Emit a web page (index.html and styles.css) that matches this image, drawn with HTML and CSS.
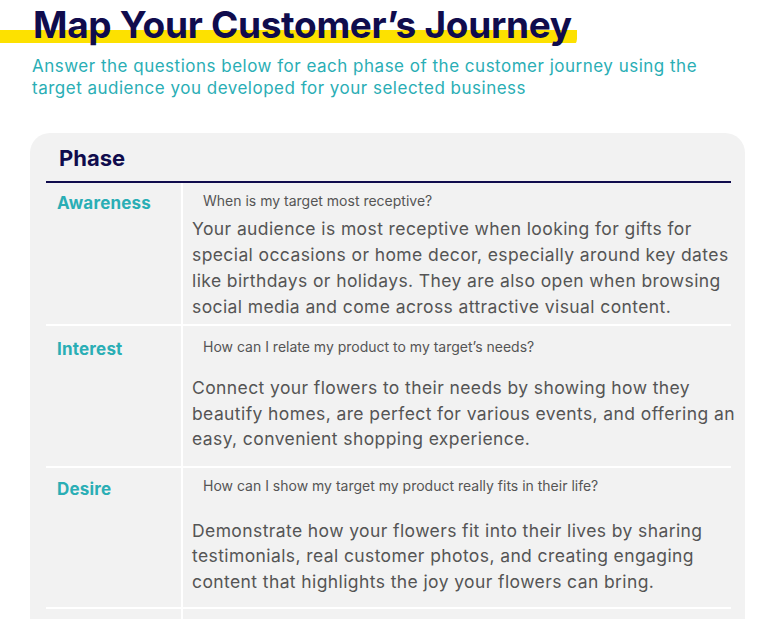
FILE: index.html
```html
<!DOCTYPE html>
<html>
<head>
<meta charset="utf-8">
<link rel="stylesheet" href="styles.css">
</head>
<body>
<header class="hero">
  <h1 class="title"><span class="title-text">Map Your Customer’s Journey</span></h1>
  <p class="subtitle">Answer the questions below for each phase of the customer journey using the target audience you developed for your selected business</p>
</header>
<section class="card">
  <div class="card-head">Phase</div>
  <div class="table">
    <div class="row row-1">
      <div class="phase">Awareness</div>
      <div class="cell">
        <div class="question">When is my target most receptive?</div>
        <div class="answer">Your audience is most receptive when looking for gifts for special occasions or home decor, especially around key dates like birthdays or holidays. They are also open when browsing social media and come across attractive visual content.</div>
      </div>
    </div>
    <div class="row row-2">
      <div class="phase">Interest</div>
      <div class="cell">
        <div class="question">How can I relate my product to my target’s needs?</div>
        <div class="answer">Connect your flowers to their needs by showing how they beautify homes, are perfect for various events, and offering an easy, convenient shopping experience.</div>
      </div>
    </div>
    <div class="row row-3">
      <div class="phase">Desire</div>
      <div class="cell">
        <div class="question">How can I show my target my product really fits in their life?</div>
        <div class="answer">Demonstrate how your flowers fit into their lives by sharing testimonials, real customer photos, and creating engaging content that highlights the joy your flowers can bring.</div>
      </div>
    </div>
    <div class="row row-empty">
      <div class="phase"></div>
      <div class="cell"></div>
    </div>
  </div>
</section>
</body>
</html>
```

FILE: styles.css
```css
* { box-sizing: border-box; }
html, body { margin: 0; padding: 0; background: #ffffff; overflow: hidden; }
body {
  font-family: "Inter", "DejaVu Sans", sans-serif;
  height: 619px;
}
.title {
  margin: 0;
  padding-top: 3px;
  font-size: 37px;
  line-height: 44px;
  font-weight: 700;
  color: #100c4d;
  letter-spacing: -0.3px;
}
.title-text {
  display: inline-block;
  padding: 0 5px 0 33px;
  background: linear-gradient(to bottom, transparent 0, transparent 27px, #fde100 27px, #fde100 40px, transparent 40px);
  border-radius: 0 8px 8px 0;
}
.subtitle {
  margin: 8px 0 0 0;
  padding: 0 40px 0 32px;
  font-size: 17px;
  letter-spacing: 0.5px;
  line-height: 22px;
  color: #2aaeb5;
  font-weight: 400;
}
.card {
  margin: 34px 0 0 30px;
  width: 715px;
  background: #f2f2f2;
  border-radius: 20px 20px 0 0;
  padding: 0 14px 0 16px;
}
.card-head {
  padding: 12px 0 0 13px;
  height: 50px;
  font-size: 22px;
  line-height: 26px;
  font-weight: 700;
  color: #100c4d;
  border-bottom: 2px solid #100c4d;
}
.row {
  display: grid;
  grid-template-columns: 137px 1fr;
  border-bottom: 2px solid #ffffff;
}
.phase {
  border-right: 2px solid #ffffff;
  padding: 9px 0 0 11px;
  font-size: 17px;
  line-height: 22px;
  font-weight: 700;
  color: #2aaeb5;
  letter-spacing: 0.2px;
}
.cell { padding: 8px 0 0 9px; }
.question {
  padding-left: 11px;
  font-size: 14px;
  line-height: 20px;
  color: #555555;
}
.answer {
  font-size: 17.5px;
  letter-spacing: 0.4px;
  line-height: 25.5px;
  color: #555555;
  margin-right: -8px;
}
.row-1 .question { margin-bottom: 5px; }
.row-1 .answer { line-height: 26px; padding-bottom: 4px; }
.row-2 .phase { padding-top: 12px; }
.row-2 .cell { padding-top: 11px; }
.row-2 .question { margin-bottom: 18px; }
.row-2 .answer { padding-bottom: 14px; }
.row-3 .phase { padding-top: 10px; }
.row-3 .question { margin-bottom: 22px; }
.row-3 .answer { padding-bottom: 13px; }
.row-empty { height: 10px; border-bottom: 0; }
```
